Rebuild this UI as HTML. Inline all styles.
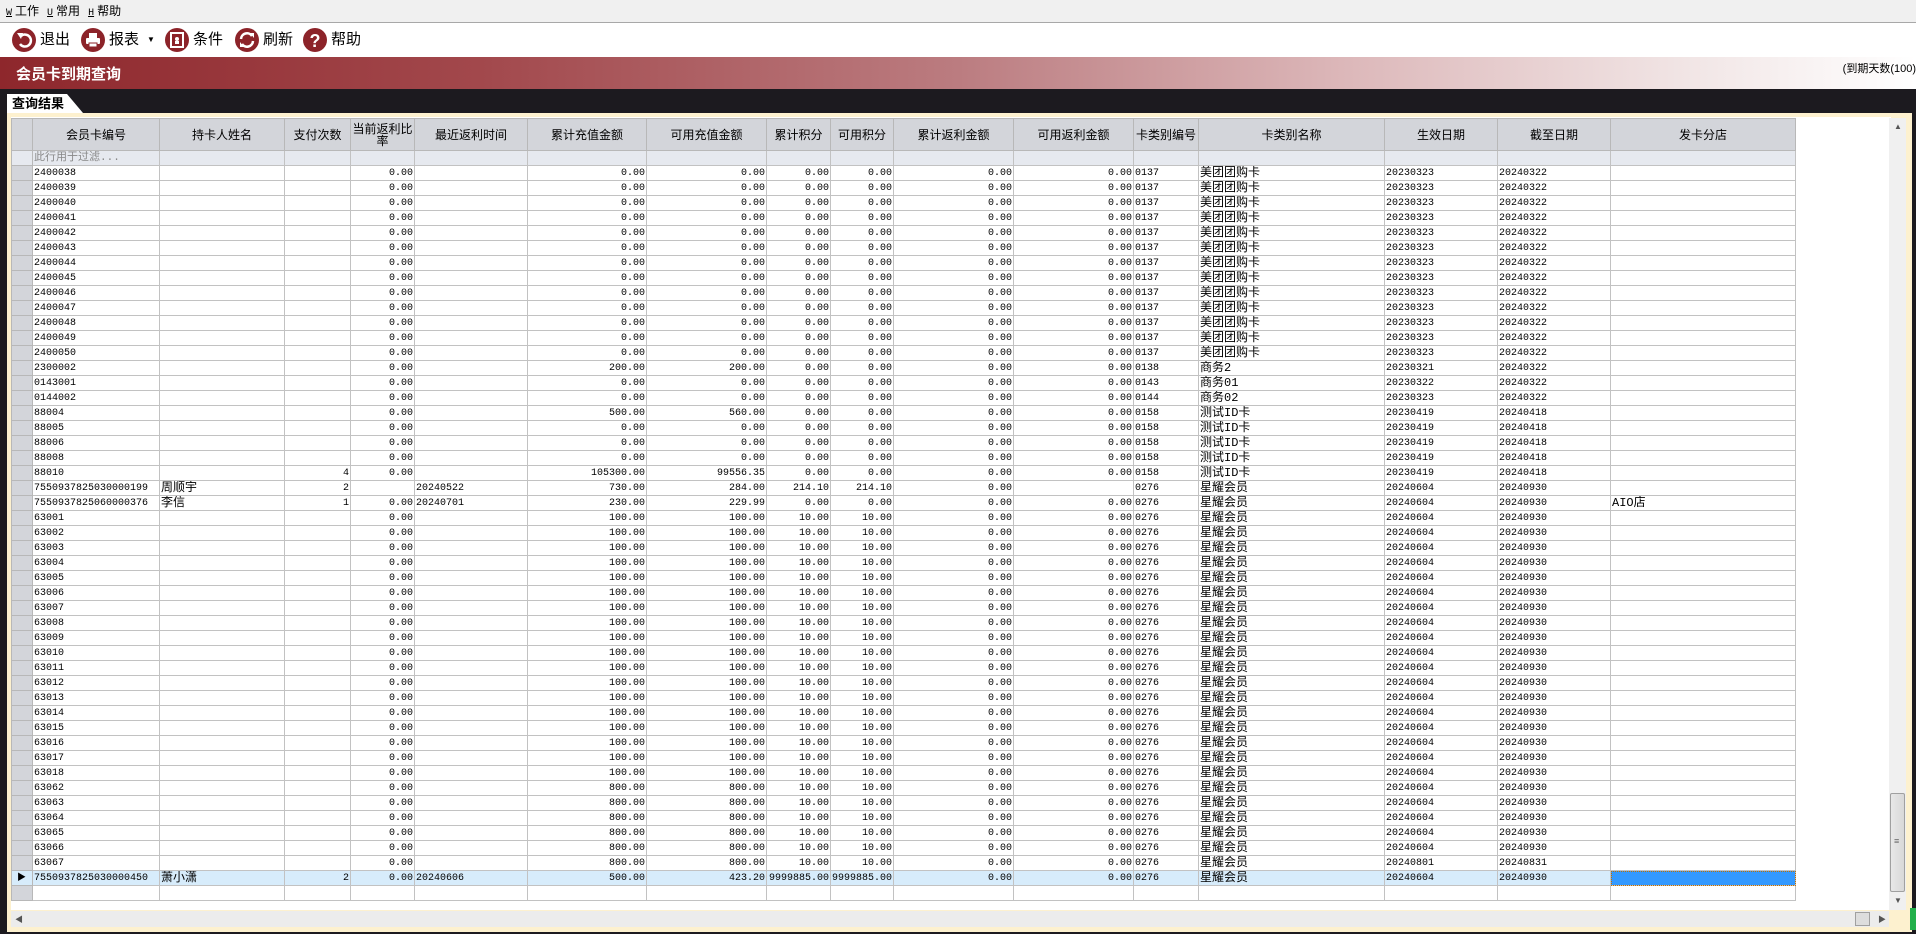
<!DOCTYPE html>
<html><head><meta charset="utf-8">
<style>
*{margin:0;padding:0;box-sizing:border-box}
body{width:1916px;height:934px;overflow:hidden;background:#1c1a1f;font-family:"Liberation Sans","Noto Sans CJK SC",sans-serif;position:relative}
#menu{position:absolute;left:0;top:0;width:1916px;height:23px;background:#f0f0f0;border-bottom:1px solid #a8a8a8;font-size:12px;line-height:23px;padding-left:6px;color:#000}
#menu span{margin-right:8px}
#menu u{font-family:"Liberation Mono",monospace;font-size:10px;margin-right:3px}
#tool{position:absolute;left:0;top:23px;width:1916px;height:34px;background:#fff}
.tb{position:absolute;top:5px;height:24px;font-size:15px;line-height:24px}
.ic{position:absolute;left:0;top:0;width:24px;height:24px;border-radius:50%;background:#8c2329}
.tb .t{position:absolute;left:28px;top:0;white-space:nowrap}
#title{position:absolute;left:0;top:57px;width:1916px;height:32px;background:linear-gradient(90deg,#8e272c 0%,#a2484c 25%,#bb7c80 50%,#dcb7b9 70%,#f1e5e5 88%,#fff 100%)}
#title .h{position:absolute;left:16px;top:6px;color:#fff;font-weight:bold;font-size:15px}
#title .r{position:absolute;right:0;top:3px;font-size:11px;color:#000}
#tab{position:absolute;left:7px;top:94px;width:76px;height:19px;background:#fff;clip-path:polygon(0 0,60px 0,76px 19px,0 19px);font-weight:bold;font-size:13px;line-height:19px;padding-left:5px;color:#000}
#frame{position:absolute;left:7px;top:113px;width:1905px;height:819px;background:#fdf1cf}
#grid{position:absolute;left:11px;top:117px;width:1880px;height:793px;background:#fff;overflow:hidden}
table{position:absolute;left:0;top:1px;width:1784px;border-collapse:collapse;table-layout:fixed;font-size:10px;font-family:"Liberation Mono","Noto Sans CJK SC",monospace}
td,th{border:1px solid #c2c2c2;height:15px;line-height:13px;padding:0 1px;white-space:nowrap;overflow:hidden;color:#000}
th{height:32px;background:#d3d5da;font-weight:normal;font-family:"Liberation Sans","Noto Sans CJK SC",sans-serif;font-size:12px;border-color:#b8b8b8;line-height:12px;white-space:normal;padding:0}
td.rh{background:#d3d5da;border-color:#b8b8b8}
tr.f td{background:#e6e9ef;color:#888;font-size:11px}
td.n{text-align:right}
tr.s td{background:#d7ecfb}
tr.s td.sel{background:#3399ff;outline:1px dotted #c07000;outline-offset:-1px}
.cj{font-size:12px}
#vs{position:absolute;left:1889px;top:118px;width:17px;height:792px;background:#f0f0f0}
#vs .th{position:absolute;left:1px;top:675px;width:15px;height:99px;background:linear-gradient(90deg,#e8e8e8,#d8d8d8);border:1px solid #a0a0a0;border-radius:2px}
#hs{position:absolute;left:11px;top:911px;width:1878px;height:16px;background:#ececec}
#hs .th{position:absolute;left:1844px;top:1px;width:15px;height:14px;background:#ddd;border:1px solid #a0a0a0}
.ar{position:absolute;font-size:8px;color:#555}
</style></head><body>
<div id="menu"><span><u>W</u>工作</span><span><u>U</u>常用</span><span><u>H</u>帮助</span></div>
<div id="tool">
<div class="tb" style="left:12px"><div class="ic"><svg width="24" height="24"><path d="M9 8 A6 6 0 1 1 8 16" fill="none" stroke="#fff" stroke-width="2.5"/><path d="M5 5 L11 5 L9 11 Z" fill="#fff"/></svg></div><span class="t">退出</span></div>
<div class="tb" style="left:81px"><div class="ic"><svg width="24" height="24"><rect x="8" y="5" width="8" height="5" fill="#fff"/><rect x="5" y="10" width="14" height="6" rx="1" fill="#fff"/><rect x="8" y="15" width="8" height="4" fill="#fff" stroke="#8c2329"/></svg></div><span class="t">报表</span><span style="position:absolute;left:66px;top:0;font-size:8px">▼</span></div>
<div class="tb" style="left:165px"><div class="ic"><svg width="24" height="24"><rect x="6" y="5" width="12" height="14" fill="none" stroke="#fff" stroke-width="2"/><circle cx="12" cy="11" r="2" fill="#fff"/><rect x="10" y="13" width="4" height="3" fill="#fff"/></svg></div><span class="t">条件</span></div>
<div class="tb" style="left:235px"><div class="ic"><svg width="24" height="24"><path d="M6 11 A6 6 0 0 1 17 8" fill="none" stroke="#fff" stroke-width="2.5"/><path d="M18 13 A6 6 0 0 1 7 16" fill="none" stroke="#fff" stroke-width="2.5"/><path d="M15 5 L19 5 L19 10Z M9 19 L5 19 L5 14Z" fill="#fff"/></svg></div><span class="t">刷新</span></div>
<div class="tb" style="left:303px"><div class="ic"><svg width="24" height="24"><text x="12" y="19" text-anchor="middle" font-size="18" font-weight="bold" fill="#fff" font-family="Liberation Sans">?</text></svg></div><span class="t">帮助</span></div>
</div>
<div id="title"><div class="h">会员卡到期查询</div><div class="r">(到期天数(100)</div></div>
<div id="tab">查询结果</div>
<div id="frame"></div>
<div id="grid">
<table>
<colgroup><col style="width:21px"><col style="width:127px"><col style="width:125px"><col style="width:66px"><col style="width:64px"><col style="width:113px"><col style="width:119px"><col style="width:120px"><col style="width:64px"><col style="width:63px"><col style="width:120px"><col style="width:120px"><col style="width:65px"><col style="width:186px"><col style="width:113px"><col style="width:113px"><col style="width:185px"></colgroup>
<tr><th></th><th>会员卡编号</th><th>持卡人姓名</th><th>支付次数</th><th>当前返利比率</th><th>最近返利时间</th><th>累计充值金额</th><th>可用充值金额</th><th>累计积分</th><th>可用积分</th><th>累计返利金额</th><th>可用返利金额</th><th>卡类别编号</th><th>卡类别名称</th><th>生效日期</th><th>截至日期</th><th>发卡分店</th></tr>
<tr class="f"><td class="rh"></td><td>此行用于过滤...</td><td></td><td></td><td></td><td></td><td></td><td></td><td></td><td></td><td></td><td></td><td></td><td></td><td></td><td></td><td></td></tr>
<tr><td class="rh"></td><td>2400038</td><td></td><td></td><td class="n">0.00</td><td></td><td class="n">0.00</td><td class="n">0.00</td><td class="n">0.00</td><td class="n">0.00</td><td class="n">0.00</td><td class="n">0.00</td><td>0137</td><td class="cj">美团团购卡</td><td>20230323</td><td>20240322</td><td></td></tr>
<tr><td class="rh"></td><td>2400039</td><td></td><td></td><td class="n">0.00</td><td></td><td class="n">0.00</td><td class="n">0.00</td><td class="n">0.00</td><td class="n">0.00</td><td class="n">0.00</td><td class="n">0.00</td><td>0137</td><td class="cj">美团团购卡</td><td>20230323</td><td>20240322</td><td></td></tr>
<tr><td class="rh"></td><td>2400040</td><td></td><td></td><td class="n">0.00</td><td></td><td class="n">0.00</td><td class="n">0.00</td><td class="n">0.00</td><td class="n">0.00</td><td class="n">0.00</td><td class="n">0.00</td><td>0137</td><td class="cj">美团团购卡</td><td>20230323</td><td>20240322</td><td></td></tr>
<tr><td class="rh"></td><td>2400041</td><td></td><td></td><td class="n">0.00</td><td></td><td class="n">0.00</td><td class="n">0.00</td><td class="n">0.00</td><td class="n">0.00</td><td class="n">0.00</td><td class="n">0.00</td><td>0137</td><td class="cj">美团团购卡</td><td>20230323</td><td>20240322</td><td></td></tr>
<tr><td class="rh"></td><td>2400042</td><td></td><td></td><td class="n">0.00</td><td></td><td class="n">0.00</td><td class="n">0.00</td><td class="n">0.00</td><td class="n">0.00</td><td class="n">0.00</td><td class="n">0.00</td><td>0137</td><td class="cj">美团团购卡</td><td>20230323</td><td>20240322</td><td></td></tr>
<tr><td class="rh"></td><td>2400043</td><td></td><td></td><td class="n">0.00</td><td></td><td class="n">0.00</td><td class="n">0.00</td><td class="n">0.00</td><td class="n">0.00</td><td class="n">0.00</td><td class="n">0.00</td><td>0137</td><td class="cj">美团团购卡</td><td>20230323</td><td>20240322</td><td></td></tr>
<tr><td class="rh"></td><td>2400044</td><td></td><td></td><td class="n">0.00</td><td></td><td class="n">0.00</td><td class="n">0.00</td><td class="n">0.00</td><td class="n">0.00</td><td class="n">0.00</td><td class="n">0.00</td><td>0137</td><td class="cj">美团团购卡</td><td>20230323</td><td>20240322</td><td></td></tr>
<tr><td class="rh"></td><td>2400045</td><td></td><td></td><td class="n">0.00</td><td></td><td class="n">0.00</td><td class="n">0.00</td><td class="n">0.00</td><td class="n">0.00</td><td class="n">0.00</td><td class="n">0.00</td><td>0137</td><td class="cj">美团团购卡</td><td>20230323</td><td>20240322</td><td></td></tr>
<tr><td class="rh"></td><td>2400046</td><td></td><td></td><td class="n">0.00</td><td></td><td class="n">0.00</td><td class="n">0.00</td><td class="n">0.00</td><td class="n">0.00</td><td class="n">0.00</td><td class="n">0.00</td><td>0137</td><td class="cj">美团团购卡</td><td>20230323</td><td>20240322</td><td></td></tr>
<tr><td class="rh"></td><td>2400047</td><td></td><td></td><td class="n">0.00</td><td></td><td class="n">0.00</td><td class="n">0.00</td><td class="n">0.00</td><td class="n">0.00</td><td class="n">0.00</td><td class="n">0.00</td><td>0137</td><td class="cj">美团团购卡</td><td>20230323</td><td>20240322</td><td></td></tr>
<tr><td class="rh"></td><td>2400048</td><td></td><td></td><td class="n">0.00</td><td></td><td class="n">0.00</td><td class="n">0.00</td><td class="n">0.00</td><td class="n">0.00</td><td class="n">0.00</td><td class="n">0.00</td><td>0137</td><td class="cj">美团团购卡</td><td>20230323</td><td>20240322</td><td></td></tr>
<tr><td class="rh"></td><td>2400049</td><td></td><td></td><td class="n">0.00</td><td></td><td class="n">0.00</td><td class="n">0.00</td><td class="n">0.00</td><td class="n">0.00</td><td class="n">0.00</td><td class="n">0.00</td><td>0137</td><td class="cj">美团团购卡</td><td>20230323</td><td>20240322</td><td></td></tr>
<tr><td class="rh"></td><td>2400050</td><td></td><td></td><td class="n">0.00</td><td></td><td class="n">0.00</td><td class="n">0.00</td><td class="n">0.00</td><td class="n">0.00</td><td class="n">0.00</td><td class="n">0.00</td><td>0137</td><td class="cj">美团团购卡</td><td>20230323</td><td>20240322</td><td></td></tr>
<tr><td class="rh"></td><td>2300002</td><td></td><td></td><td class="n">0.00</td><td></td><td class="n">200.00</td><td class="n">200.00</td><td class="n">0.00</td><td class="n">0.00</td><td class="n">0.00</td><td class="n">0.00</td><td>0138</td><td class="cj">商务2</td><td>20230321</td><td>20240322</td><td></td></tr>
<tr><td class="rh"></td><td>0143001</td><td></td><td></td><td class="n">0.00</td><td></td><td class="n">0.00</td><td class="n">0.00</td><td class="n">0.00</td><td class="n">0.00</td><td class="n">0.00</td><td class="n">0.00</td><td>0143</td><td class="cj">商务01</td><td>20230322</td><td>20240322</td><td></td></tr>
<tr><td class="rh"></td><td>0144002</td><td></td><td></td><td class="n">0.00</td><td></td><td class="n">0.00</td><td class="n">0.00</td><td class="n">0.00</td><td class="n">0.00</td><td class="n">0.00</td><td class="n">0.00</td><td>0144</td><td class="cj">商务02</td><td>20230323</td><td>20240322</td><td></td></tr>
<tr><td class="rh"></td><td>88004</td><td></td><td></td><td class="n">0.00</td><td></td><td class="n">500.00</td><td class="n">560.00</td><td class="n">0.00</td><td class="n">0.00</td><td class="n">0.00</td><td class="n">0.00</td><td>0158</td><td class="cj">测试ID卡</td><td>20230419</td><td>20240418</td><td></td></tr>
<tr><td class="rh"></td><td>88005</td><td></td><td></td><td class="n">0.00</td><td></td><td class="n">0.00</td><td class="n">0.00</td><td class="n">0.00</td><td class="n">0.00</td><td class="n">0.00</td><td class="n">0.00</td><td>0158</td><td class="cj">测试ID卡</td><td>20230419</td><td>20240418</td><td></td></tr>
<tr><td class="rh"></td><td>88006</td><td></td><td></td><td class="n">0.00</td><td></td><td class="n">0.00</td><td class="n">0.00</td><td class="n">0.00</td><td class="n">0.00</td><td class="n">0.00</td><td class="n">0.00</td><td>0158</td><td class="cj">测试ID卡</td><td>20230419</td><td>20240418</td><td></td></tr>
<tr><td class="rh"></td><td>88008</td><td></td><td></td><td class="n">0.00</td><td></td><td class="n">0.00</td><td class="n">0.00</td><td class="n">0.00</td><td class="n">0.00</td><td class="n">0.00</td><td class="n">0.00</td><td>0158</td><td class="cj">测试ID卡</td><td>20230419</td><td>20240418</td><td></td></tr>
<tr><td class="rh"></td><td>88010</td><td></td><td class="n">4</td><td class="n">0.00</td><td></td><td class="n">105300.00</td><td class="n">99556.35</td><td class="n">0.00</td><td class="n">0.00</td><td class="n">0.00</td><td class="n">0.00</td><td>0158</td><td class="cj">测试ID卡</td><td>20230419</td><td>20240418</td><td></td></tr>
<tr><td class="rh"></td><td>7550937825030000199</td><td class="cj">周顺宇</td><td class="n">2</td><td></td><td>20240522</td><td class="n">730.00</td><td class="n">284.00</td><td class="n">214.10</td><td class="n">214.10</td><td class="n">0.00</td><td></td><td>0276</td><td class="cj">星耀会员</td><td>20240604</td><td>20240930</td><td></td></tr>
<tr><td class="rh"></td><td>7550937825060000376</td><td class="cj">李信</td><td class="n">1</td><td class="n">0.00</td><td>20240701</td><td class="n">230.00</td><td class="n">229.99</td><td class="n">0.00</td><td class="n">0.00</td><td class="n">0.00</td><td class="n">0.00</td><td>0276</td><td class="cj">星耀会员</td><td>20240604</td><td>20240930</td><td class="cj">AIO店</td></tr>
<tr><td class="rh"></td><td>63001</td><td></td><td></td><td class="n">0.00</td><td></td><td class="n">100.00</td><td class="n">100.00</td><td class="n">10.00</td><td class="n">10.00</td><td class="n">0.00</td><td class="n">0.00</td><td>0276</td><td class="cj">星耀会员</td><td>20240604</td><td>20240930</td><td></td></tr>
<tr><td class="rh"></td><td>63002</td><td></td><td></td><td class="n">0.00</td><td></td><td class="n">100.00</td><td class="n">100.00</td><td class="n">10.00</td><td class="n">10.00</td><td class="n">0.00</td><td class="n">0.00</td><td>0276</td><td class="cj">星耀会员</td><td>20240604</td><td>20240930</td><td></td></tr>
<tr><td class="rh"></td><td>63003</td><td></td><td></td><td class="n">0.00</td><td></td><td class="n">100.00</td><td class="n">100.00</td><td class="n">10.00</td><td class="n">10.00</td><td class="n">0.00</td><td class="n">0.00</td><td>0276</td><td class="cj">星耀会员</td><td>20240604</td><td>20240930</td><td></td></tr>
<tr><td class="rh"></td><td>63004</td><td></td><td></td><td class="n">0.00</td><td></td><td class="n">100.00</td><td class="n">100.00</td><td class="n">10.00</td><td class="n">10.00</td><td class="n">0.00</td><td class="n">0.00</td><td>0276</td><td class="cj">星耀会员</td><td>20240604</td><td>20240930</td><td></td></tr>
<tr><td class="rh"></td><td>63005</td><td></td><td></td><td class="n">0.00</td><td></td><td class="n">100.00</td><td class="n">100.00</td><td class="n">10.00</td><td class="n">10.00</td><td class="n">0.00</td><td class="n">0.00</td><td>0276</td><td class="cj">星耀会员</td><td>20240604</td><td>20240930</td><td></td></tr>
<tr><td class="rh"></td><td>63006</td><td></td><td></td><td class="n">0.00</td><td></td><td class="n">100.00</td><td class="n">100.00</td><td class="n">10.00</td><td class="n">10.00</td><td class="n">0.00</td><td class="n">0.00</td><td>0276</td><td class="cj">星耀会员</td><td>20240604</td><td>20240930</td><td></td></tr>
<tr><td class="rh"></td><td>63007</td><td></td><td></td><td class="n">0.00</td><td></td><td class="n">100.00</td><td class="n">100.00</td><td class="n">10.00</td><td class="n">10.00</td><td class="n">0.00</td><td class="n">0.00</td><td>0276</td><td class="cj">星耀会员</td><td>20240604</td><td>20240930</td><td></td></tr>
<tr><td class="rh"></td><td>63008</td><td></td><td></td><td class="n">0.00</td><td></td><td class="n">100.00</td><td class="n">100.00</td><td class="n">10.00</td><td class="n">10.00</td><td class="n">0.00</td><td class="n">0.00</td><td>0276</td><td class="cj">星耀会员</td><td>20240604</td><td>20240930</td><td></td></tr>
<tr><td class="rh"></td><td>63009</td><td></td><td></td><td class="n">0.00</td><td></td><td class="n">100.00</td><td class="n">100.00</td><td class="n">10.00</td><td class="n">10.00</td><td class="n">0.00</td><td class="n">0.00</td><td>0276</td><td class="cj">星耀会员</td><td>20240604</td><td>20240930</td><td></td></tr>
<tr><td class="rh"></td><td>63010</td><td></td><td></td><td class="n">0.00</td><td></td><td class="n">100.00</td><td class="n">100.00</td><td class="n">10.00</td><td class="n">10.00</td><td class="n">0.00</td><td class="n">0.00</td><td>0276</td><td class="cj">星耀会员</td><td>20240604</td><td>20240930</td><td></td></tr>
<tr><td class="rh"></td><td>63011</td><td></td><td></td><td class="n">0.00</td><td></td><td class="n">100.00</td><td class="n">100.00</td><td class="n">10.00</td><td class="n">10.00</td><td class="n">0.00</td><td class="n">0.00</td><td>0276</td><td class="cj">星耀会员</td><td>20240604</td><td>20240930</td><td></td></tr>
<tr><td class="rh"></td><td>63012</td><td></td><td></td><td class="n">0.00</td><td></td><td class="n">100.00</td><td class="n">100.00</td><td class="n">10.00</td><td class="n">10.00</td><td class="n">0.00</td><td class="n">0.00</td><td>0276</td><td class="cj">星耀会员</td><td>20240604</td><td>20240930</td><td></td></tr>
<tr><td class="rh"></td><td>63013</td><td></td><td></td><td class="n">0.00</td><td></td><td class="n">100.00</td><td class="n">100.00</td><td class="n">10.00</td><td class="n">10.00</td><td class="n">0.00</td><td class="n">0.00</td><td>0276</td><td class="cj">星耀会员</td><td>20240604</td><td>20240930</td><td></td></tr>
<tr><td class="rh"></td><td>63014</td><td></td><td></td><td class="n">0.00</td><td></td><td class="n">100.00</td><td class="n">100.00</td><td class="n">10.00</td><td class="n">10.00</td><td class="n">0.00</td><td class="n">0.00</td><td>0276</td><td class="cj">星耀会员</td><td>20240604</td><td>20240930</td><td></td></tr>
<tr><td class="rh"></td><td>63015</td><td></td><td></td><td class="n">0.00</td><td></td><td class="n">100.00</td><td class="n">100.00</td><td class="n">10.00</td><td class="n">10.00</td><td class="n">0.00</td><td class="n">0.00</td><td>0276</td><td class="cj">星耀会员</td><td>20240604</td><td>20240930</td><td></td></tr>
<tr><td class="rh"></td><td>63016</td><td></td><td></td><td class="n">0.00</td><td></td><td class="n">100.00</td><td class="n">100.00</td><td class="n">10.00</td><td class="n">10.00</td><td class="n">0.00</td><td class="n">0.00</td><td>0276</td><td class="cj">星耀会员</td><td>20240604</td><td>20240930</td><td></td></tr>
<tr><td class="rh"></td><td>63017</td><td></td><td></td><td class="n">0.00</td><td></td><td class="n">100.00</td><td class="n">100.00</td><td class="n">10.00</td><td class="n">10.00</td><td class="n">0.00</td><td class="n">0.00</td><td>0276</td><td class="cj">星耀会员</td><td>20240604</td><td>20240930</td><td></td></tr>
<tr><td class="rh"></td><td>63018</td><td></td><td></td><td class="n">0.00</td><td></td><td class="n">100.00</td><td class="n">100.00</td><td class="n">10.00</td><td class="n">10.00</td><td class="n">0.00</td><td class="n">0.00</td><td>0276</td><td class="cj">星耀会员</td><td>20240604</td><td>20240930</td><td></td></tr>
<tr><td class="rh"></td><td>63062</td><td></td><td></td><td class="n">0.00</td><td></td><td class="n">800.00</td><td class="n">800.00</td><td class="n">10.00</td><td class="n">10.00</td><td class="n">0.00</td><td class="n">0.00</td><td>0276</td><td class="cj">星耀会员</td><td>20240604</td><td>20240930</td><td></td></tr>
<tr><td class="rh"></td><td>63063</td><td></td><td></td><td class="n">0.00</td><td></td><td class="n">800.00</td><td class="n">800.00</td><td class="n">10.00</td><td class="n">10.00</td><td class="n">0.00</td><td class="n">0.00</td><td>0276</td><td class="cj">星耀会员</td><td>20240604</td><td>20240930</td><td></td></tr>
<tr><td class="rh"></td><td>63064</td><td></td><td></td><td class="n">0.00</td><td></td><td class="n">800.00</td><td class="n">800.00</td><td class="n">10.00</td><td class="n">10.00</td><td class="n">0.00</td><td class="n">0.00</td><td>0276</td><td class="cj">星耀会员</td><td>20240604</td><td>20240930</td><td></td></tr>
<tr><td class="rh"></td><td>63065</td><td></td><td></td><td class="n">0.00</td><td></td><td class="n">800.00</td><td class="n">800.00</td><td class="n">10.00</td><td class="n">10.00</td><td class="n">0.00</td><td class="n">0.00</td><td>0276</td><td class="cj">星耀会员</td><td>20240604</td><td>20240930</td><td></td></tr>
<tr><td class="rh"></td><td>63066</td><td></td><td></td><td class="n">0.00</td><td></td><td class="n">800.00</td><td class="n">800.00</td><td class="n">10.00</td><td class="n">10.00</td><td class="n">0.00</td><td class="n">0.00</td><td>0276</td><td class="cj">星耀会员</td><td>20240604</td><td>20240930</td><td></td></tr>
<tr><td class="rh"></td><td>63067</td><td></td><td></td><td class="n">0.00</td><td></td><td class="n">800.00</td><td class="n">800.00</td><td class="n">10.00</td><td class="n">10.00</td><td class="n">0.00</td><td class="n">0.00</td><td>0276</td><td class="cj">星耀会员</td><td>20240801</td><td>20240831</td><td></td></tr>
<tr class="s"><td class="rh" style="font-size:9px;padding:0 0 0 5px">▶</td><td>7550937825030000450</td><td class="cj">萧小潇</td><td class="n">2</td><td class="n">0.00</td><td>20240606</td><td class="n">500.00</td><td class="n">423.20</td><td class="n">9999885.00</td><td class="n">9999885.00</td><td class="n">0.00</td><td class="n">0.00</td><td>0276</td><td class="cj">星耀会员</td><td>20240604</td><td>20240930</td><td class="sel"></td></tr>
<tr><td class="rh"></td><td></td><td></td><td></td><td></td><td></td><td></td><td></td><td></td><td></td><td></td><td></td><td></td><td></td><td></td><td></td><td></td></tr>
</table>
</div>
<div id="vs"><span class="ar" style="left:5px;top:4px">▲</span><div class="th"><span style="position:absolute;left:3px;top:42px;font-size:9px;color:#666">≡</span></div><span class="ar" style="left:5px;top:778px">▼</span></div>
<div id="hs"><span class="ar" style="left:4px;top:3px">◀</span><div class="th"></div><span class="ar" style="left:1867px;top:3px">▶</span></div>
<div style="position:absolute;left:1910px;top:908px;width:6px;height:22px;background:#22b04b"></div>
</body></html>
